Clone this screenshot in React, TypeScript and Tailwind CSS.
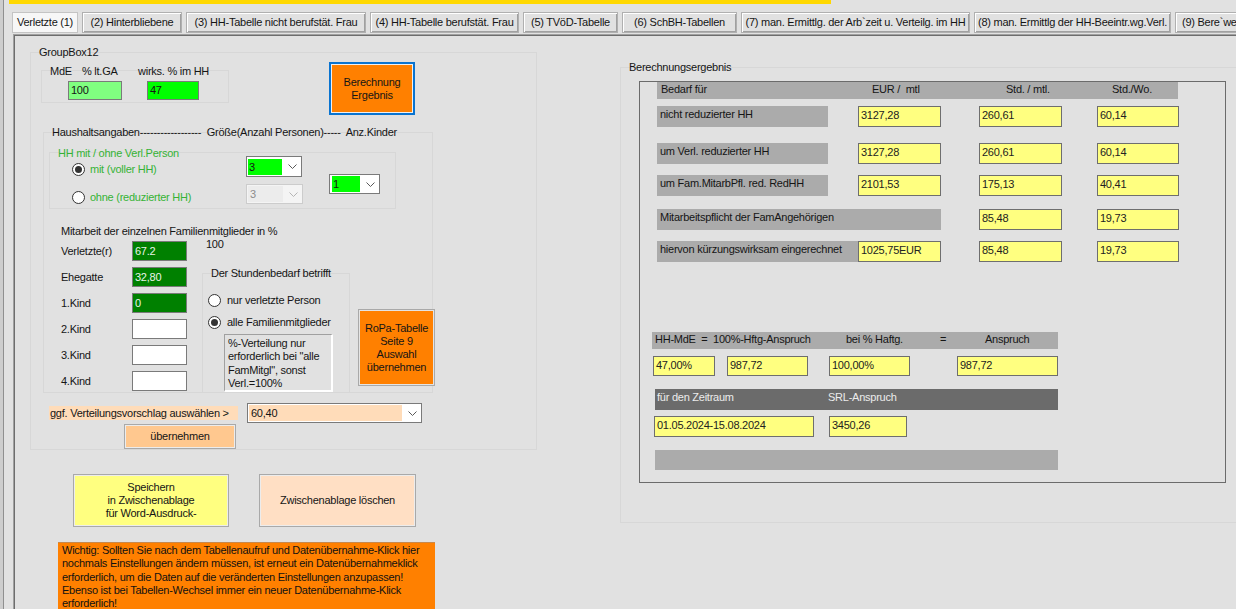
import React from "react";

const FAINT = "border border-[#d7d7d7]";

function Chevron({ color = "#5a5a5a" }: { color?: string }) {
  return (
    <svg width="9" height="5" viewBox="0 0 9 5" className="shrink-0">
      <polyline points="0.5,0.5 4.5,4.5 8.5,0.5" fill="none" stroke={color} strokeWidth="1" />
    </svg>
  );
}

function Radio({ on }: { on?: boolean }) {
  return (
    <span className="w-[13px] h-[13px] rounded-full border border-[#333] bg-white flex items-center justify-center shrink-0">
      {on && <span className="w-[7px] h-[7px] rounded-full bg-[#333]" />}
    </span>
  );
}

function Yb({ children, className = "" }: { children?: React.ReactNode; className?: string }) {
  return (
    <div className={`bg-[#ffff80] border border-[#6e6e6e] pl-[2px] pt-[2px] leading-[13px] text-[#222] shrink-0 ${className}`}>
      {children}
    </div>
  );
}

function Bar({ children, className = "" }: { children?: React.ReactNode; className?: string }) {
  return <div className={`bg-[#ababab] pl-[3px] pt-[2px] leading-[13px] ${className}`}>{children}</div>;
}

const tabs = [
  { t: "Verletzte (1)", w: "w-[66px] justify-center", sel: true },
  { t: "(2)  Hinterbliebene", w: "w-[100px] justify-center" },
  { t: "(3) HH-Tabelle nicht berufstät. Frau", w: "w-[180px] justify-center" },
  { t: "(4) HH-Tabelle berufstät. Frau", w: "w-[149px] justify-center" },
  { t: "(5) TVöD-Tabelle", w: "w-[95px] justify-center" },
  { t: "(6) SchBH-Tabellen", w: "w-[115px] justify-center" },
  { t: "(7) man. Ermittlg. der Arb`zeit u. Verteilg. im HH", w: "w-[229px] justify-center" },
  { t: "(8) man. Ermittlg der HH-Beeintr.wg.Verl.", w: "w-[197px] justify-center" },
  { t: "(9) Bere`we", w: "w-[120px] justify-start pl-[6px]" },
];

const rowGrid = "grid grid-cols-[171px_30px_83px_38px_83px_35px_82px] ml-[17px] h-[21px]";

export default function App() {
  return (
    <div className="w-[1236px] h-[609px] overflow-hidden bg-[#e1e1e1] flex font-['Liberation_Sans',Arial,sans-serif] text-[11px] tracking-[-0.25px] leading-[13px] text-[#151515]">
      {/* window frame */}
      <div className="flex shrink-0 h-full">
        <div className="w-[3px] bg-[#cdcdcd]" />
        <div className="w-[1px] bg-[#8f8f8f]" />
        <div className="w-[5px] bg-[#e1e1e1]" />
      </div>

      <div className="flex flex-col flex-1 min-w-0">
        <div className="h-[4px] w-[822px] bg-[#ffd800] shrink-0" />

        {/* tab strip */}
        <div className="flex gap-[4px] ml-[3px] mt-[8px] h-[21px] shrink-0 whitespace-nowrap">
          {tabs.map((tb) => (
            <div
              key={tb.t}
              className={`${tb.w} shrink-0 flex items-center overflow-hidden ${
                tb.sel
                  ? "bg-[#f7f7f7] border border-[#c4c4c4]"
                  : "bg-[#e1e1e1] border border-[#b0b0b0] shadow-[inset_1px_1px_0_#ffffff,inset_-1px_-1px_0_#a0a0a0]"
              }`}
            >
              {tb.t}
            </div>
          ))}
        </div>

        {/* tab page */}
        <div className="ml-[4px] mt-[1px] flex-1 border-t border-l border-[#a0a0a0] shadow-[inset_1px_1px_0_#6d6d6d] flex items-start">
          {/* left column */}
          <div className="flex flex-col shrink-0 w-[523px]">
            <div className={`ml-[16px] mt-[17px] w-[507px] h-[398px] ${FAINT} flex flex-col`}>
              <div className="-mt-[7px] ml-[8px] h-[13px]">GroupBox12</div>

              <div className="flex items-start">
                <div className={`ml-[10px] mt-[11px] w-[188px] h-[33px] ${FAINT} flex flex-col shrink-0`}>
                  <div className="-mt-[6px] flex h-[13px]">
                    <span className="ml-[8px] w-[32px]">MdE</span>
                    <span className="w-[56px]">%  lt.GA</span>
                    <span>wirks. % im HH</span>
                  </div>
                  <div className="flex mt-[3px]">
                    <div className="ml-[26px] w-[54px] h-[19px] bg-[#80ff80] border border-[#7a7a7a] pl-[2px] pt-[2px]">100</div>
                    <div className="ml-[25px] w-[52px] h-[19px] bg-[#00ff00] border border-[#7a7a7a] pl-[2px] pt-[2px]">47</div>
                  </div>
                </div>
                <div className="ml-[100px] mt-[3px] w-[86px] h-[53px] border-2 border-[#0a74d0] bg-[#ff8000] shadow-[inset_0_0_0_1px_#f0f0f0] flex flex-col items-center justify-center leading-[13px] text-center">
                  <span>Berechnung</span>
                  <span>Ergebnis</span>
                </div>
              </div>

              {/* household group */}
              <div className={`ml-[12px] mt-[17px] w-[390px] h-[261px] ${FAINT} flex flex-col shrink-0`}>
                <div className="-mt-[7px] ml-[8px] h-[13px] whitespace-pre">Haushaltsangaben------------------  Größe(Anzahl Personen)-----  Anz.Kinder</div>

                <div className={`ml-[5px] mt-[13px] w-[347px] h-[57px] ${FAINT} flex flex-col shrink-0`}>
                  <div className="-mt-[6px] ml-[8px] h-[13px] text-[#35b335]">HH mit / ohne Verl.Person</div>
                  <div className="flex items-start -mt-[4px]">
                    <div className="ml-[22px] w-[174px] pt-[7px] flex flex-col gap-[15px] text-[#35b335]">
                      <div className="flex items-center h-[13px]">
                        <Radio on />
                        <span className="ml-[5px]">mit (voller HH)</span>
                      </div>
                      <div className="flex items-center h-[13px]">
                        <Radio />
                        <span className="ml-[5px]">ohne (reduzierter HH)</span>
                      </div>
                    </div>
                    <div className="flex flex-col">
                      <div className="w-[56px] h-[21px] border border-[#7a7a7a] bg-white flex items-center pl-[1px] pr-[4px]">
                        <div className="w-[34px] h-[16px] bg-[#00ff00] leading-[16px] pl-[1px]">3</div>
                        <div className="flex-1" />
                        <Chevron />
                      </div>
                      <div className="mt-[7px] w-[57px] h-[20px] border border-[#cccccc] bg-[#f4f4f4] flex items-center pl-[1px] pr-[4px] text-[#8d8d8d]">
                        <div className="w-[35px] h-[16px] bg-[#ececec] leading-[16px] pl-[2px]">3</div>
                        <div className="flex-1" />
                        <Chevron color="#b5b5b5" />
                      </div>
                    </div>
                    <div className="ml-[26px] mt-[18px] w-[51px] h-[20px] border border-[#7a7a7a] bg-white flex items-center pl-[2px] pr-[4px]">
                      <div className="w-[28px] h-[16px] bg-[#00ff00] leading-[16px] pl-[1px]">1</div>
                      <div className="flex-1" />
                      <Chevron />
                    </div>
                  </div>
                </div>

                <div className="ml-[17px] mt-[16px] h-[13px]">Mitarbeit der einzelnen Familienmitglieder in %</div>

                <div className="flex items-start">
                  <div className="ml-[17px] pt-[3px] flex flex-col gap-[6px]">
                    {[
                      ["Verletzte(r)", "67.2", true],
                      ["Ehegatte", "32,80", true],
                      ["1.Kind", "0", true],
                      ["2.Kind", "", false],
                      ["3.Kind", "", false],
                      ["4.Kind", "", false],
                    ].map(([l, v, g]) => (
                      <div key={l as string} className="flex items-center h-[20px]">
                        <span className="w-[71px]">{l}</span>
                        <div
                          className={`w-[55px] h-[20px] border border-[#7a7a7a] pl-[2px] pt-[3px] ${
                            g ? "bg-[#008000] text-[#e8f4e8]" : "bg-white"
                          }`}
                        >
                          {v}
                        </div>
                      </div>
                    ))}
                  </div>

                  <div className="ml-[13px] flex flex-col">
                    <div className="ml-[6px] h-[13px]">100</div>
                    <div className="flex items-start mt-[22px]">
                      <div className={`ml-[2px] w-[148px] h-[120px] ${FAINT} flex flex-col shrink-0`}>
                        <div className="-mt-[7px] ml-[8px] h-[13px]">Der Stundenbedarf betrifft</div>
                        <div className="flex items-center mt-[14px] ml-[5px] h-[13px]">
                          <Radio />
                          <span className="ml-[6px]">nur verletzte Person</span>
                        </div>
                        <div className="flex items-center mt-[9px] ml-[5px] h-[13px]">
                          <Radio on />
                          <span className="ml-[6px]">alle Familienmitglieder</span>
                        </div>
                        <div className="ml-[21px] mt-[5px] w-[109px] h-[60px] border-t border-l border-[#a0a0a0] border-r-2 border-b-2 border-r-white border-b-white pl-[3px] pt-[2px] leading-[13.3px]">
                          %-Verteilung nur erforderlich bei "alle FamMitgl", sonst Verl.=100%
                        </div>
                      </div>
                      <div className="ml-[8px] mt-[36px] w-[77px] h-[77px] border border-[#a9a9a9] bg-[#ff8000] shadow-[inset_0_0_0_1px_#e4e4e4] flex flex-col items-center justify-center text-center leading-[13px] shrink-0">
                        <span>RoPa-Tabelle</span>
                        <span>Seite 9</span>
                        <span>Auswahl</span>
                        <span>übernehmen</span>
                      </div>
                    </div>
                  </div>
                </div>
              </div>

              <div className="flex items-start ml-[18px] mt-[10px]">
                <div className="mt-[3px] w-[189px] h-[14px] bg-[#ffdcb9] pl-[1px] leading-[14px] shrink-0">
                  ggf. Verteilungsvorschlag auswählen &gt;
                </div>
                <div className="ml-[9px] w-[175px] h-[20px] border border-[#7a7a7a] bg-white flex items-center pl-[1px] pr-[4px] shrink-0">
                  <div className="w-[153px] h-[16px] bg-[#ffdcb9] leading-[16px] pl-[2px]">60,40</div>
                  <div className="flex-1" />
                  <Chevron />
                </div>
              </div>
              <div className="ml-[93px] mt-[1px] w-[112px] h-[26px] border border-[#a9a9a9] bg-[#ffc88f] shadow-[inset_0_0_0_1px_#ececec] flex items-center justify-center">
                übernehmen
              </div>
            </div>

            <div className="flex ml-[59px] mt-[24px] gap-[30px]">
              <div className="w-[156px] h-[53px] border border-[#a9a9a9] bg-[#ffff80] shadow-[inset_0_0_0_1px_#ececec] flex flex-col items-center justify-center text-center leading-[13.3px]">
                <span>Speichern</span>
                <span>in Zwischenablage</span>
                <span>für Word-Ausdruck-</span>
              </div>
              <div className="w-[157px] h-[53px] border border-[#a9a9a9] bg-[#ffdfc4] shadow-[inset_0_0_0_1px_#ececec] flex items-center justify-center">
                Zwischenablage löschen
              </div>
            </div>

            <div className="ml-[44px] mt-[15px] w-[377px] h-[70px] bg-[#ff8000] border-t border-[#c9884a] pl-[4px] pt-[1px] leading-[13.3px] text-[#111] shrink-0">
              Wichtig: Sollten Sie nach dem Tabellenaufruf und Datenübernahme-Klick hier nochmals Einstellungen ändern müssen, ist erneut ein Datenübernahmeklick erforderlich, um die Daten auf die veränderten Einstellungen anzupassen! Ebenso ist bei Tabellen-Wechsel immer ein neuer Datenübernahme-Klick erforderlich!
            </div>
          </div>

          {/* result group */}
          <div className={`ml-[83px] mt-[32px] w-[640px] h-[456px] ${FAINT} flex flex-col shrink-0`}>
            <div className="-mt-[7px] ml-[8px] h-[13px]">Berechnungsergebnis</div>
            <div className="ml-[18px] mt-[7px] w-[587px] h-[402px] border border-[#6b6b6b] flex flex-col shrink-0">
              <div className={`${rowGrid} !h-[17px] bg-[#ababab] w-[521px] pt-[1px]`}>
                <span className="pl-[4px]">Bedarf für</span>
                <span />
                <span className="col-span-2 pl-[14px] whitespace-pre">EUR /  mtl</span>
                <span className="col-span-2 pl-[27px]">Std. / mtl.</span>
                <span className="pl-[15px]">Std./Wo.</span>
              </div>

              <div className={`${rowGrid} mt-[7px]`}>
                <Bar>nicht reduzierter HH</Bar>
                <span />
                <Yb>3127,28</Yb>
                <span />
                <Yb>260,61</Yb>
                <span />
                <Yb>60,14</Yb>
              </div>
              <div className={`${rowGrid} mt-[16px]`}>
                <Bar>um Verl. reduzierter HH</Bar>
                <span />
                <Yb>3127,28</Yb>
                <span />
                <Yb>260,61</Yb>
                <span />
                <Yb>60,14</Yb>
              </div>
              <div className={`${rowGrid} mt-[11px]`}>
                <Bar>um Fam.MitarbPfl. red. RedHH</Bar>
                <span />
                <Yb>2101,53</Yb>
                <span />
                <Yb>175,13</Yb>
                <span />
                <Yb>40,41</Yb>
              </div>
              <div className={`${rowGrid} mt-[13px]`}>
                <Bar className="col-span-3">Mitarbeitspflicht der FamAngehörigen</Bar>
                <span />
                <Yb>85,48</Yb>
                <span />
                <Yb>19,73</Yb>
              </div>
              <div className={`${rowGrid} mt-[11px]`}>
                <Bar className="col-span-2">hiervon kürzungswirksam eingerechnet</Bar>
                <Yb>1025,75EUR</Yb>
                <span />
                <Yb>85,48</Yb>
                <span />
                <Yb>19,73</Yb>
              </div>

              <div className="ml-[12px] mt-[70px] w-[406px] h-[17px] bg-[#ababab] flex pt-[1px] whitespace-pre shrink-0">
                <span className="pl-[3px] w-[194px]">HH-MdE  =  100%-Hftg-Anspruch</span>
                <span className="w-[94px]">bei % Haftg.</span>
                <span className="w-[45px]">=</span>
                <span>Anspruch</span>
              </div>
              <div className="flex mt-[7px] h-[20px]">
                <Yb className="ml-[13px] w-[62px]">47,00%</Yb>
                <Yb className="ml-[12px] w-[81px]">987,72</Yb>
                <Yb className="ml-[21px] w-[81px]">100,00%</Yb>
                <Yb className="ml-[47px] w-[101px]">987,72</Yb>
              </div>
              <div className="ml-[15px] mt-[13px] w-[403px] h-[21px] bg-[#6b6b6b] text-[#ececec] flex pt-[2px] shrink-0">
                <span className="pl-[2px] w-[173px]">für den Zeitraum</span>
                <span>SRL-Anspruch</span>
              </div>
              <div className="flex mt-[6px] h-[21px]">
                <Yb className="ml-[14px] w-[160px]">01.05.2024-15.08.2024</Yb>
                <Yb className="ml-[15px] w-[78px]">3450,26</Yb>
              </div>
              <div className="ml-[15px] mt-[13px] w-[403px] h-[20px] bg-[#ababab] shrink-0" />
            </div>
          </div>
        </div>
      </div>
    </div>
  );
}
